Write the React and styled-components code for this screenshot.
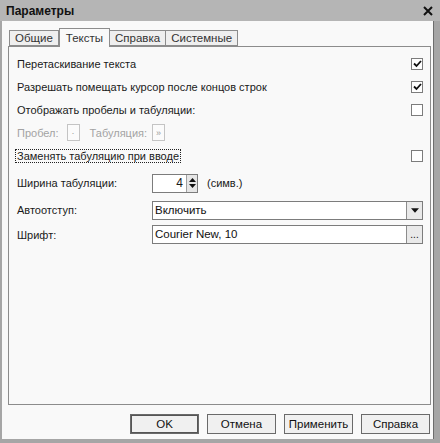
import React from 'react';
import styled, {createGlobalStyle} from 'styled-components';

const GlobalStyle = createGlobalStyle`
  html, body {
    margin: 0;
    padding: 0;
    background: #fff;
  }
  body {
    font-family: 'Liberation Sans', Arial, sans-serif;
    font-size: 11px;
    color: #1a1a1a;
  }
`;

const Window = styled.div`
  width: 440px;
  height: 443px;
  box-sizing: border-box;
  background: #f9f9f9;
  border-left: 2px solid #a6a6a6;
  border-right: 6px solid #a6a6a6;
  border-bottom: 4px solid #a6a6a6;
  display: flex;
  flex-direction: column;
`;

const TitleBar = styled.div`
  height: 21px;
  margin: 0 -6px 0 -2px;
  background: #b5b5b5;
  display: flex;
  align-items: center;
  justify-content: space-between;
  padding: 0 7px 0 6px;
  box-sizing: border-box;
`;

const Title = styled.span`
  font-weight: bold;
  font-size: 12px;
  color: #111;
`;

const Body = styled.div`
  flex: 1;
  display: flex;
  flex-direction: column;
  padding: 7px 2px 0 6px;
  box-sizing: border-box;
  border-right: 1px solid #6d6d6d;
`;

const Tabs = styled.div`
  display: flex;
  align-items: flex-end;
  height: 18px;
  padding-left: 1px;
  position: relative;
  z-index: 1;
`;

const Tab = styled.div`
  height: ${p => (p.$active ? 19 : 16)}px;
  box-sizing: border-box;
  padding: 0 ${p => (p.$active ? 6 : 5)}px;
  margin-bottom: ${p => (p.$active ? -1 : 0)}px;
  display: flex;
  align-items: center;
  border: 1px solid #8c8c8c;
  border-bottom: ${p => (p.$active ? 'none' : '1px solid #8c8c8c')};
  border-left: ${p => (p.$first || p.$active ? '1px solid #8c8c8c' : 'none')};
  background: ${p => (p.$active ? '#f9f9f9' : '#efefef')};
  color: #333;
  font-size: 11.5px;
`;

const Panel = styled.div`
  height: 359px;
  box-sizing: border-box;
  border: 1px solid #8c8c8c;
  padding: 5px 7px 0 6px;
  display: flex;
  flex-direction: column;
`;

const Row = styled.div`
  height: ${p => p.$h || 23}px;
  flex-shrink: 0;
  display: flex;
  align-items: center;
  justify-content: space-between;
  color: ${p => (p.$disabled ? '#a3a3a3' : '#1a1a1a')};
`;

const Label = styled.span`
  padding: 0 1px;
  border: 1px dotted ${p => (p.$focus ? '#222' : 'transparent')};
`;

const Box = styled.div`
  width: 12px;
  height: 12px;
  flex-shrink: 0;
  box-sizing: border-box;
  border: 1px solid #7c7c7c;
  background: #fff;
  display: flex;
  align-items: center;
  justify-content: center;
`;

const Inline = styled.div`
  display: flex;
  align-items: center;
`;

const GlyphBox = styled.div`
  width: 13px;
  height: 17px;
  flex-shrink: 0;
  box-sizing: border-box;
  border: 1px solid #c4c4c4;
  background: #fbfbfb;
  display: flex;
  align-items: center;
  justify-content: center;
  font-size: 9px;
  color: #9a9a9a;
  margin: 0 ${p => p.$mr || 0}px 0 ${p => p.$ml || 0}px;
`;

const FieldLabel = styled.span`
  width: 137px;
  flex-shrink: 0;
  padding-left: 2px;
  box-sizing: border-box;
`;

const Spin = styled.div`
  width: 46px;
  height: 19px;
  box-sizing: border-box;
  border: 1px solid #7c7c7c;
  background: #fff;
  display: flex;
`;

const SpinValue = styled.div`
  flex: 1;
  text-align: right;
  padding-right: 3px;
  line-height: 17px;
  font-size: 12px;
`;

const SpinButtons = styled.div`
  width: 10px;
  border-left: 1px solid #a0a0a0;
  background: #e6e6e6;
  display: flex;
  flex-direction: column;
  align-items: center;
  justify-content: space-around;
  padding: 2px 0;
`;

const Units = styled.span`
  margin-left: 9px;
`;

const Field = styled.div`
  flex: 1;
  height: 19px;
  box-sizing: border-box;
  border: 1px solid #7c7c7c;
  background: #fff;
  display: flex;
  align-items: stretch;
`;

const FieldText = styled.div`
  flex: 1;
  padding-left: 2px;
  line-height: 17px;
  font-size: 11.5px;
  color: #111;
`;

const FieldButton = styled.div`
  width: 15px;
  border-left: 1px solid #8c8c8c;
  background: #e9e9e9;
  display: flex;
  align-items: center;
  justify-content: center;
  font-size: 10px;
  color: #111;
`;

const Footer = styled.div`
  display: flex;
  justify-content: flex-end;
  gap: 8px;
  padding: 9px 1px 0 0;
`;

const Button = styled.div`
  width: 69px;
  height: 20px;
  box-sizing: border-box;
  border: 1px solid #6a6a6a;
  outline: ${p => (p.$default ? '1px solid #555' : 'none')};
  outline-offset: -2px;
  background: #f0f0f0;
  display: flex;
  align-items: center;
  justify-content: center;
  font-size: 11.5px;
  color: #111;
`;

const Check = () => (
  <svg width="9" height="8" viewBox="0 0 9 8">
    <path d="M1 3.5 L3.5 6 L8 1" fill="none" stroke="#111" strokeWidth="1.8" />
  </svg>
);

const Checkbox = ({checked}) => <Box>{checked && <Check />}</Box>;

const Close = () => (
  <svg width="10" height="10" viewBox="0 0 10 10">
    <path d="M1 1 L9 9 M9 1 L1 9" stroke="#111" strokeWidth="2" />
  </svg>
);

const Arrow = ({up, size = 5}) => (
  <svg width={size + 2} height={size - 1} viewBox="0 0 7 4">
    <path d={up ? 'M0 4 L3.5 0 L7 4 Z' : 'M0 0 L7 0 L3.5 4 Z'} fill="#111" />
  </svg>
);

const App = () => {
  const tabs = ['Общие', 'Тексты', 'Справка', 'Системные'];
  return (
    <>
      <GlobalStyle />
      <Window>
        <TitleBar>
          <Title>Параметры</Title>
          <Close />
        </TitleBar>
        <Body>
          <Tabs>
            {tabs.map((t, i) => (
              <Tab key={t} $first={i === 0} $active={i === 1}>
                {t}
              </Tab>
            ))}
          </Tabs>
          <Panel>
            <Row>
              <Label>Перетаскивание текста</Label>
              <Checkbox checked />
            </Row>
            <Row>
              <Label>Разрешать помещать курсор после концов строк</Label>
              <Checkbox checked />
            </Row>
            <Row>
              <Label>Отображать пробелы и табуляции:</Label>
              <Checkbox />
            </Row>
            <Row $disabled>
              <Inline>
                <Label>Пробел:</Label>
                <GlyphBox $ml={6} $mr={8}>·</GlyphBox>
                <Label>Табуляция:</Label>
                <GlyphBox $ml={3}>»</GlyphBox>
              </Inline>
            </Row>
            <Row>
              <Label $focus>Заменять табуляцию при вводе</Label>
              <Checkbox />
            </Row>
            <Row $h={32}>
              <Inline>
                <FieldLabel>Ширина табуляции:</FieldLabel>
                <Spin>
                  <SpinValue>4</SpinValue>
                  <SpinButtons>
                    <Arrow up />
                    <Arrow />
                  </SpinButtons>
                </Spin>
                <Units>(симв.)</Units>
              </Inline>
            </Row>
            <Row $h={22}>
              <FieldLabel>Автоотступ:</FieldLabel>
              <Field>
                <FieldText>Включить</FieldText>
                <FieldButton>
                  <Arrow size={6} />
                </FieldButton>
              </Field>
            </Row>
            <Row $h={27}>
              <FieldLabel>Шрифт:</FieldLabel>
              <Field>
                <FieldText>Courier New, 10</FieldText>
                <FieldButton>...</FieldButton>
              </Field>
            </Row>
          </Panel>
          <Footer>
            <Button $default>OK</Button>
            <Button>Отмена</Button>
            <Button>Применить</Button>
            <Button>Справка</Button>
          </Footer>
        </Body>
      </Window>
    </>
  );
};

export default App;
